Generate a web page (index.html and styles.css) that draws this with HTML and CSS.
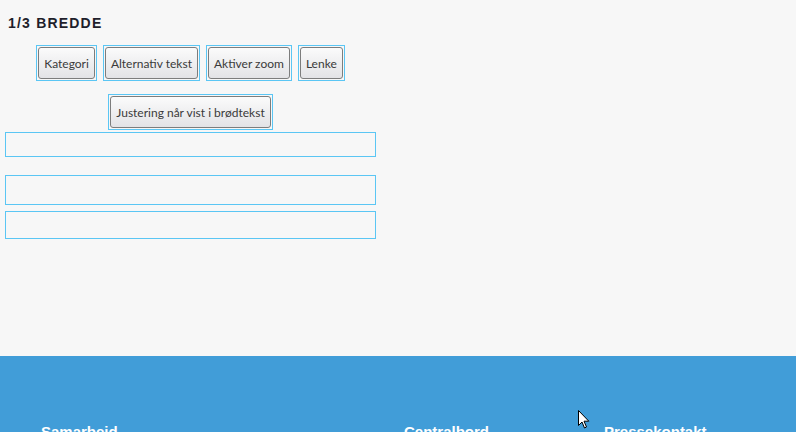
FILE: index.html
```html
<!DOCTYPE html>
<html lang="no">
<head>
    <meta charset="UTF-8">
    <meta name="viewport" content="width=device-width, initial-scale=1.0">
    <title>1/3 bredde</title>
    <link rel="stylesheet" href="styles.css">
</head>
<body>
    <div class="panel">
        <h2 class="panel-title">1/3 BREDDE</h2>
        <div class="toolbar">
            <span class="slot"><button>Kategori</button></span>
            <span class="slot"><button>Alternativ tekst</button></span>
            <span class="slot"><button>Aktiver zoom</button></span>
            <span class="slot"><button>Lenke</button></span>
        </div>
        <div class="toolbar second">
            <span class="slot"><button>Justering når vist i brødtekst</button></span>
        </div>
        <div class="field field-small"></div>
        <div class="field field-large"></div>
        <div class="field field-medium"></div>
    </div>

    <footer class="footer">
        <div class="footer-col">Samarbeid</div>
        <div class="footer-col">Centralbord</div>
        <div class="footer-col">Pressekontakt</div>
        <svg class="cursor" width="12" height="19" viewBox="0 0 12 19">
            <path d="M0.5 0.5 L0.5 15.5 L4 12 L6.5 18 L8.5 17 L6 11.2 L10.8 11.2 Z" fill="#fff" stroke="#000" stroke-width="1"/>
        </svg>
    </footer>
</body>
</html>
```

FILE: styles.css
```css
body {
    margin: 0;
    background-color: #f7f7f7;
    font-family: "Liberation Sans", Arial, sans-serif;
}
.panel {
    box-sizing: border-box;
    height: 356px;
    width: 376px;
    padding: 15px 0 0 5px;
}
.panel-title {
    margin: 0 0 0 3px;
    font-size: 14px;
    line-height: 16px;
    font-weight: bold;
    letter-spacing: 1.2px;
    color: #1f1f2b;
}
.toolbar {
    display: flex;
    justify-content: center;
    gap: 6px;
    margin-top: 14px;
}
.toolbar.second {
    margin-top: 13px;
}
.slot {
    display: block;
    border: 1px solid #5bc6f4;
    padding: 1px;
}
button {
    display: block;
    height: 32px;
    padding: 0 5px;
    border: 1px solid #7d7d7d;
    border-radius: 3px;
    background: linear-gradient(#fbfbfb, #e3e3e6);
    font-family: Lato, "Open Sans", sans-serif;
    font-size: 12px;
    color: #3a3a3a;
    cursor: pointer;
}
.field {
    box-sizing: border-box;
    border: 1px solid #5bc6f4;
}
.field-small {
    margin-top: 2px;
    height: 25px;
}
.field-large {
    margin-top: 18px;
    height: 30px;
}
.field-medium {
    margin-top: 6px;
    height: 28px;
}
.footer {
    position: relative;
    box-sizing: border-box;
    height: 76px;
    overflow: hidden;
    padding: 67px 0 0 41px;
    background-color: #419dd8;
    display: grid;
    grid-template-columns: 363px 200px auto;
    color: #fff;
    font-size: 15px;
    font-weight: bold;
}
.cursor {
    position: absolute;
    left: 578px;
    top: 54px;
}
```
